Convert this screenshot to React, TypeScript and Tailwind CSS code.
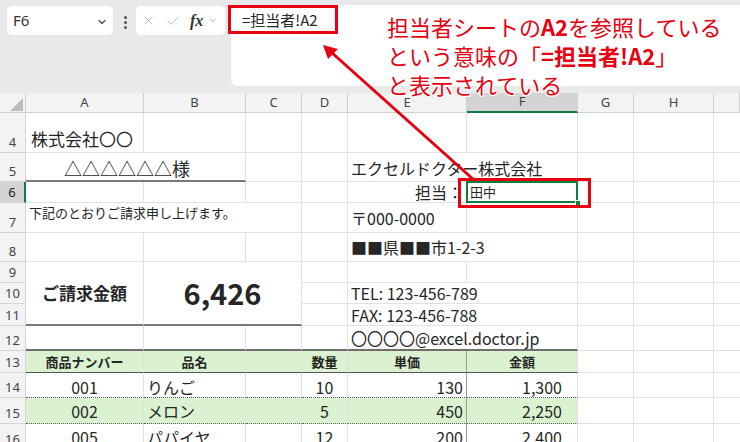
import React from 'react';
import { ChevronDown, X, Check } from 'lucide-react';
import { twMerge } from 'tailwind-merge';

const base =
  'flex whitespace-nowrap border-r border-b border-[#e1e1e1] px-[3px] text-[#262626]';

function C({ className = '', children }: { className?: string; children?: React.ReactNode }) {
  return <div className={twMerge(base, className)}>{children}</div>;
}

function RH({ n, sel }: { n: string; sel?: boolean }) {
  return (
    <div
      className={twMerge(
        "flex items-end justify-center bg-[#f3f3f3] border-r border-b border-[#d5d5d5] text-[13px] leading-[20px] text-[#444] [font-family:'Noto_Sans',sans-serif]",
        sel ? 'bg-[#d4d4d4] border-r-2 border-r-[#107c41] text-[#222]' : ''
      )}
    >
      {n}
    </div>
  );
}

function CH({ l, sel }: { l: string; sel?: boolean }) {
  return (
    <div
      className={twMerge(
        "flex items-center justify-center bg-[#f3f3f3] border-r border-b border-[#cfcfcf] text-[13px] text-[#444] [font-family:'Noto_Sans',sans-serif]",
        sel ? 'bg-[#d4d4d4] border-b-2 border-b-[#107c41]' : ''
      )}
    >
      {l}
    </div>
  );
}

// G, H, I blanks at the end of every row
const Tail = () => (
  <>
    <C />
    <C />
    <C className="border-r-0" />
  </>
);

const green = 'bg-[#daf2d0]';
const dotted = '[border-bottom-style:dotted] border-b-[#5a5a5a]';

export default function App() {
  return (
    <div className="relative w-[740px] h-[442px] overflow-hidden bg-white [font-family:'Noto_Sans_CJK_JP','Noto_Sans',sans-serif]">
      {/* formula bar */}
      <div className="flex items-start h-[93px] bg-[#e9e9e9]">
        <div className="ml-[7px] mt-[6px] w-[106px] h-[29px] bg-white rounded-[5px] flex items-center justify-between pl-[6px] pr-[5px]">
          <span className="text-[15px] text-[#333] [font-family:'Noto_Sans',sans-serif]">F6</span>
          <ChevronDown size={12} strokeWidth={2.2} className="text-[#444] mt-[3px]" />
        </div>
        <div className="ml-[11px] mt-[16px] flex flex-col gap-[2px]">
          <span className="block w-[3px] h-[3px] rounded-full bg-[#555]" />
          <span className="block w-[3px] h-[3px] rounded-full bg-[#555]" />
          <span className="block w-[3px] h-[3px] rounded-full bg-[#555]" />
        </div>
        <div className="ml-[9px] mt-[6px] w-[89px] h-[29px] bg-white rounded-[5px] flex items-center pl-[5px]">
          <X size={15} strokeWidth={1.4} className="text-[#b3b3b3]" />
          <Check size={16} strokeWidth={1.4} className="ml-[9px] text-[#b3b3b3]" />
          <span className="ml-[9px] text-[16px] leading-none italic font-bold text-[#333] [font-family:'Liberation_Serif',serif]">
            fx
          </span>
          <ChevronDown size={11} strokeWidth={1.6} className="ml-[4px] text-[#999]" />
        </div>
        <div className="ml-[6px] mt-[5px] flex-1 h-[81px] bg-white rounded-bl-[6px] pl-[11px] pt-[4px] text-[15px] text-[#262626]">
          =担当者!A2
        </div>
      </div>

      {/* sheet */}
      <div className="grid grid-cols-[26px_118px_102px_56px_46px_119px_111px_56px_80px_26px] grid-rows-[20px_40px_29px_21px_30px_29px_21px_21px_22px_25px_22px_25px_26px_26px]">
        {/* column headers */}
        <div className="relative bg-[#f3f3f3] border-r border-b border-[#cfcfcf]">
          <svg className="absolute left-[10px] top-[5px]" width="14" height="14" viewBox="0 0 14 14">
            <polygon points="13,0 13,13 0,13" fill="#bdbdbd" />
          </svg>
        </div>
        <CH l="A" />
        <CH l="B" />
        <CH l="C" />
        <CH l="D" />
        <CH l="E" />
        <CH l="F" sel />
        <CH l="G" />
        <CH l="H" />
        <CH l="" />

        {/* row 4 */}
        <RH n="4" />
        <C className="items-end pb-[2px] pl-[5px] text-[17px] leading-[22px]">株式会社〇〇</C>
        <C />
        <C />
        <C />
        <C />
        <C />
        <Tail />

        {/* row 5 */}
        <RH n="5" />
        <C className="col-span-2 items-end pl-[38px] text-[18px] leading-[24px] border-b-2 border-b-[#7a7a7a]">
          △△△△△△様
        </C>
        <C />
        <C />
        <C className="col-span-2 items-end pb-[2px] text-[16px] leading-[22px]">エクセルドクター株式会社</C>
        <Tail />

        {/* row 6 */}
        <RH n="6" sel />
        <C />
        <C />
        <C />
        <C />
        <C className="items-center justify-end text-[16px] leading-[20px]">担当：</C>
        <C className="relative items-center text-[13px] leading-[20px]">
          田中
          <div className="absolute inset-[-1px] border-2 border-[#107c41]" />
          <div className="absolute right-[-4px] bottom-[-4px] w-[6px] h-[6px] bg-[#107c41] border border-white" />
        </C>
        <Tail />

        {/* row 7 */}
        <RH n="7" />
        <C className="col-span-3 items-start pt-[1px] text-[13px] leading-[18px]">下記のとおりご請求申し上げます。</C>
        <C />
        <C className="items-center text-[16px] leading-[20px]">〒000-0000</C>
        <C />
        <Tail />

        {/* row 8 */}
        <RH n="8" />
        <C />
        <C />
        <C />
        <C />
        <C className="col-span-2 items-center text-[16px] leading-[20px]">■■県■■市1-2-3</C>
        <Tail />

        {/* row 9 - 11 */}
        <RH n="9" />
        <C className="row-span-3 items-center justify-center font-bold text-[17px] border-b-2 border-b-[#7a7a7a]">
          ご請求金額
        </C>
        <C className="col-span-2 row-span-3 items-center justify-center font-bold text-[29px] leading-none pb-[2px] border-b-2 border-b-[#7a7a7a]">
          6,426
        </C>
        <C />
        <C />
        <C />
        <Tail />

        <RH n="10" />
        <C />
        <C className="col-span-2 items-center text-[16px] leading-[20px]">TEL: 123-456-789</C>
        <Tail />

        <RH n="11" />
        <C />
        <C className="col-span-2 items-center text-[16px] leading-[20px]">FAX: 123-456-788</C>
        <Tail />

        {/* row 12 */}
        <RH n="12" />
        <C className="border-b-2 border-b-[#6e6e6e]" />
        <C className="border-b-2 border-b-[#6e6e6e]" />
        <C className="border-b-2 border-b-[#6e6e6e]" />
        <C className="border-b-2 border-b-[#6e6e6e]" />
        <C className="col-span-2 items-center text-[16px] leading-[20px] border-b-2 border-b-[#6e6e6e]">
          〇〇〇〇@excel.doctor.jp
        </C>
        <Tail />

        {/* row 13 header */}
        <RH n="13" />
        <C className={`${green} items-center justify-center font-bold text-[13px] border-b-[#555]`}>商品ナンバー</C>
        <C className={`${green} items-center justify-center font-bold text-[13px] border-b-[#555]`}>品名</C>
        <C className={`${green} border-b-[#555]`} />
        <C className={`${green} items-center justify-center font-bold text-[13px] border-b-[#555]`}>数量</C>
        <C className={`${green} items-center justify-center font-bold text-[13px] border-b-[#555] border-r-[#9a9a9a]`}>単価</C>
        <C className={`${green} items-center justify-center font-bold text-[13px] border-b-[#555]`}>金額</C>
        <Tail />

        {/* row 14 */}
        <RH n="14" />
        <C className={`items-center justify-center pt-[3px] text-[16px] ${dotted}`}>001</C>
        <C className={`items-center pt-[3px] text-[16px] ${dotted}`}>りんご</C>
        <C className={dotted} />
        <C className={`items-center justify-center pt-[3px] text-[16px] ${dotted}`}>10</C>
        <C className={`items-center justify-end pt-[3px] text-[16px] border-r-[#9a9a9a] ${dotted}`}>130</C>
        <C className={`items-center justify-end pt-[3px] pr-[15px] text-[16px] ${dotted}`}>1,300</C>
        <Tail />

        {/* row 15 */}
        <RH n="15" />
        <C className={`${green} items-center justify-center text-[16px] ${dotted}`}>002</C>
        <C className={`${green} items-center text-[16px] ${dotted}`}>メロン</C>
        <C className={`${green} ${dotted}`} />
        <C className={`${green} items-center justify-center text-[16px] ${dotted}`}>5</C>
        <C className={`${green} items-center justify-end text-[16px] border-r-[#9a9a9a] ${dotted}`}>450</C>
        <C className={`${green} items-center justify-end pr-[15px] text-[16px] ${dotted}`}>2,250</C>
        <Tail />

        {/* row 16 */}
        <RH n="16" />
        <C className="items-center justify-center text-[16px]">005</C>
        <C className="items-center text-[16px]">パパイヤ</C>
        <C />
        <C className="items-center justify-center text-[16px]">12</C>
        <C className="items-center justify-end text-[16px] border-r-[#9a9a9a]">200</C>
        <C className="items-center justify-end pr-[15px] text-[16px]">2,400</C>
        <Tail />
      </div>

      {/* annotations */}
      <div className="absolute left-[228px] top-[5px] w-[110px] h-[29px] border-[3px] border-[#e60012]" />
      <div className="absolute left-[458px] top-[178px] w-[133px] h-[30px] border-[3px] border-[#e60012]" />
      <svg className="absolute left-0 top-0 pointer-events-none" width="740" height="442">
        <line x1="474" y1="180" x2="331" y2="52" stroke="#e60012" strokeWidth="3" />
        <polygon points="323,45 338,49 328,59" fill="#e60012" />
      </svg>
      <div className="absolute left-[387px] top-[12px] text-[22px] leading-[29px] text-[#e60012] whitespace-nowrap [text-shadow:1px_1px_0_#fff,-1px_-1px_0_#fff,1px_-1px_0_#fff,-1px_1px_0_#fff,0_1px_0_#fff,0_-1px_0_#fff,1px_0_0_#fff,-1px_0_0_#fff]">
        <div>
          担当者シートの<b>A2</b>を参照している
        </div>
        <div>
          という意味の「<b>=担当者!A2</b>」
        </div>
        <div>と表示されている</div>
      </div>
    </div>
  );
}
